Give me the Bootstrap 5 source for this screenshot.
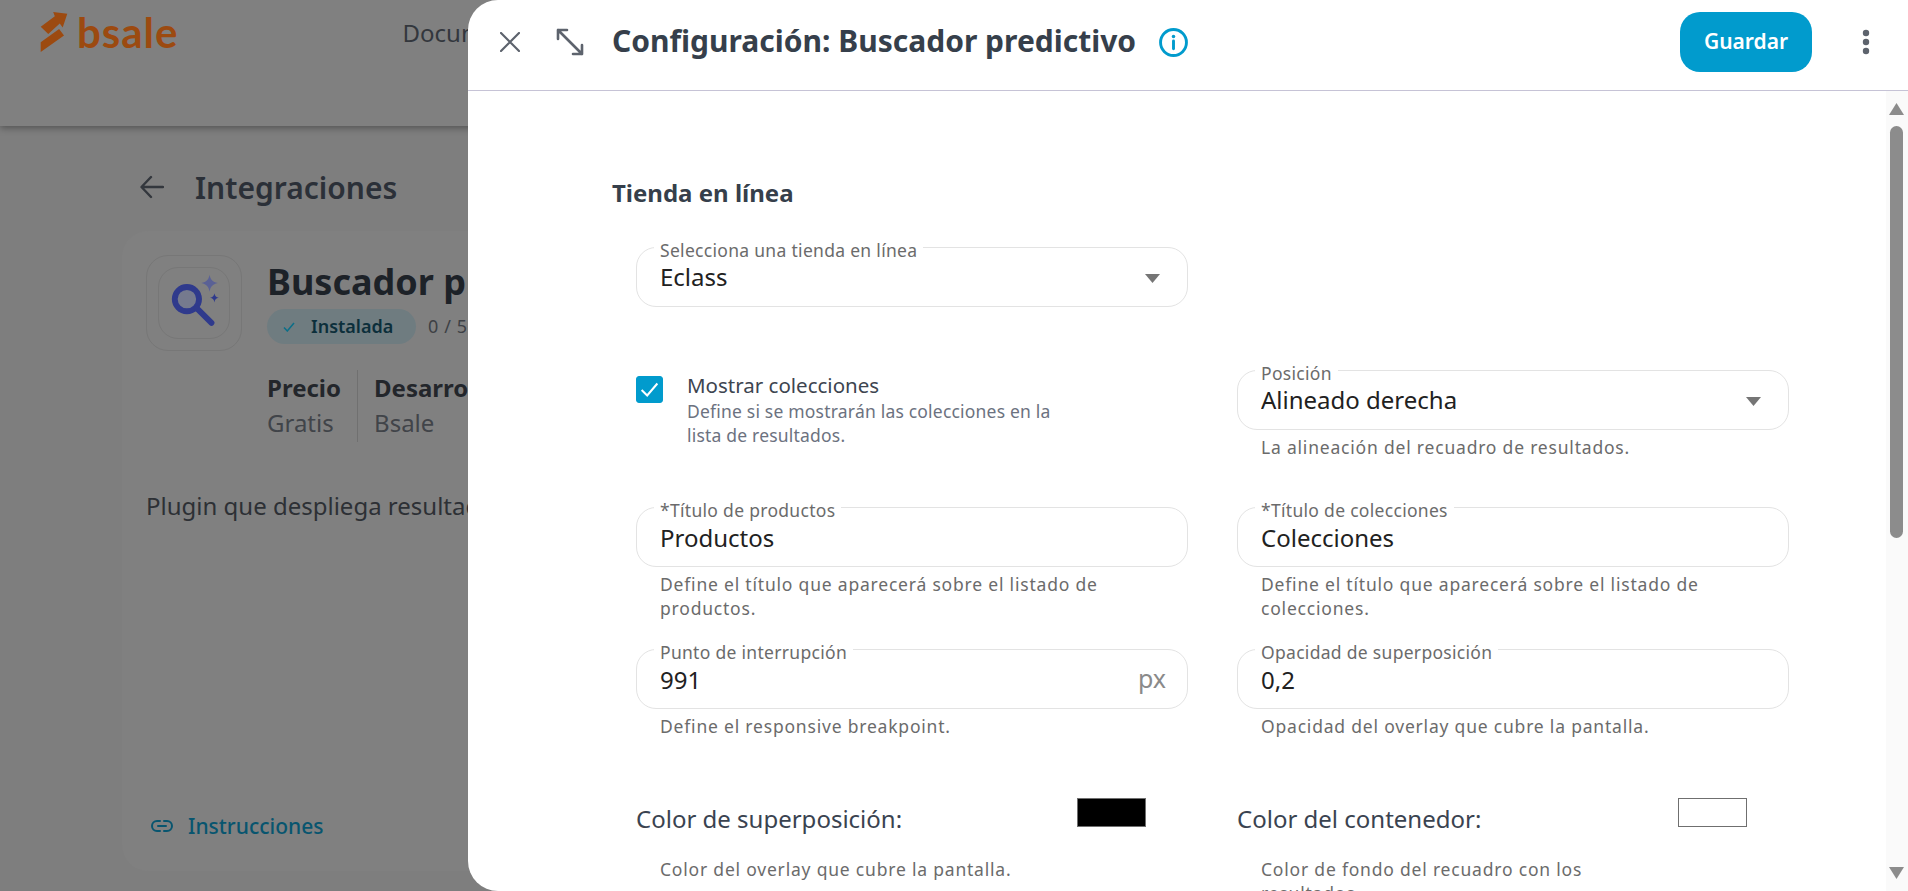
<!DOCTYPE html>
<html lang="es">
<head>
  <meta charset="UTF-8">
  <title>Configuración: Buscador predictivo</title>
  <meta name="viewport" content="width=device-width, initial-scale=1">
  <link href="https://cdn.jsdelivr.net/npm/bootstrap@5.3.3/dist/css/bootstrap.min.css" rel="stylesheet">
  <style>
    html, body { height: 100%; }
    body {
      background: #7e7e7e;
      font-family: "Noto Sans", "Open Sans", sans-serif;
      overflow: hidden;
    }
    /* page behind the panel, colours already dimmed */
    .page-top {
      height: 126px;
      background: #808080;
      box-shadow: 0 2px 7px rgba(0,0,0,.35);
      padding: 11px 0 0 40px;
    }
    .logo-word {
      font-family: "Lato", sans-serif;
      font-weight: 700;
      font-size: 42px;
      line-height: 42px;
      letter-spacing: 1px;
      color: #9c4a10;
      margin-left: 9px;
    }
    .page-link-top { font-size: 24px; color: #33373d; margin: 4px 0 0 224px; white-space: nowrap; }
    .page-head { margin: 41px 0 0 140px; height: 40px; }
    .page-head-title { font-size: 30px; font-weight: 600; color: #2b3038; margin-left: 31px; }
    .app-card {
      margin: 24px 0 0 122px;
      width: 1660px;
      height: 640px;
      background: #808080;
      border-radius: 26px;
      padding: 24px;
    }
    .app-icon-out {
      width: 96px; height: 96px;
      border: 1px solid #777;
      border-radius: 22px;
      flex: none;
    }
    .app-icon-in {
      width: 72px; height: 72px;
      border: 1px solid #777;
      border-radius: 20px;
    }
    .app-info { margin-left: 25px; }
    .app-name { font-size: 36px; font-weight: 700; color: #1d2228; line-height: 54px; }
    .installed {
      width: 149px; height: 35px;
      background: #6f7c80;
      border-radius: 18px;
      font-size: 18px; font-weight: 600;
      color: #0c2f3b;
    }
    .rating { font-size: 18px; color: #3d4045; letter-spacing: .6px; margin-left: 12px; }
    .meta-block { margin-top: 26px; }
    .meta-h { font-size: 24px; font-weight: 700; color: #23262b; line-height: 35px; }
    .meta-v { font-size: 24px; color: #414449; line-height: 35px; }
    .meta-line { border-left: 1px solid #707070; margin-left: 16px; padding-left: 16px; height: 72px; }
    .app-desc { font-size: 24px; color: #2d3035; margin-top: 46px; white-space: nowrap; }
    .app-link {
      font-size: 21px; font-weight: 500; color: #08556f;
      margin: auto 0 5px 5px;
      column-gap: 15px;
    }

    /* panel */
    .cfg-panel {
      position: absolute;
      top: 0; right: 0; bottom: 0; left: 468px;
      background: #fff;
      border-radius: 30px 0 0 30px;
      overflow: hidden;
    }
    .cfg-top {
      height: 91px;
      flex: none;
      border-bottom: 1px solid #c6c3d6;
      padding: 0 37px 6px 32px;
    }
    .cfg-expand { margin: 0 28px 0 36px; }
    .cfg-title { font-size: 30px; font-weight: 700; color: #363f4b; margin: -2px 0 0 0; white-space: nowrap; }
    .cfg-info { margin-left: 23px; }
    .cfg-kebab { margin-left: 49px; }
    .btn-save {
      width: 132px; height: 60px;
      background: #019bcd;
      border: 0;
      border-radius: 20px;
      color: #fff;
      font-size: 21px;
      font-weight: 600;
    }
    .cfg-main { min-height: 0; }
    .cfg-body { padding: 88px 0 0 144px; overflow: hidden; }
    .cfg-section { font-size: 24px; font-weight: 700; color: #363f4b; line-height: 28px; margin: 0 0 40px; }
    .cfg-grid {
      grid-template-columns: 552px 552px;
      grid-template-rows: 123px 137px 142px 149px auto;
      column-gap: 49px;
      margin-left: 24px;
    }
    .float-field { position: relative; height: 60px; }
    .float-field label {
      position: absolute;
      top: -6px; left: 18px;
      padding: 0 6px;
      background: #fff;
      font-size: 17.5px;
      line-height: 19px;
      letter-spacing: .3px;
      color: #6b6b6b;
    }
    .float-field .form-control,
    .float-field .form-select {
      height: 60px;
      border: 1px solid #e3e3e3;
      border-radius: 20px;
      padding: 0 50px 0 23px;
      font-size: 24px;
      color: #212121;
    }
    .float-field .form-select {
      background-image: url("data:image/svg+xml,%3csvg xmlns='http://www.w3.org/2000/svg' viewBox='0 0 15 9'%3e%3cpath fill='%23757575' d='M0 0h15L7.5 9z'/%3e%3c/svg%3e");
      background-position: right 27px top 26px;
      background-size: 15px 9px;
    }
    .field-unit {
      position: absolute;
      right: 22px; top: 14px;
      font-size: 25px;
      line-height: 30px;
      color: #8a8a8a;
    }
    .help-text {
      font-size: 17.5px;
      line-height: 24px;
      letter-spacing: .8px;
      color: #6b6b6b;
      padding: 5px 0 0 24px;
      max-width: 500px;
    }
    .check-box.form-check-input {
      width: 27px; height: 27px;
      margin: 6px 24px 0 0;
      border-radius: 3px;
      flex: none;
    }
    .check-box.form-check-input:checked {
      background-color: #019bcd;
      border-color: #019bcd;
      background-size: 100% 100%;
      background-image: url("data:image/svg+xml,%3csvg xmlns='http://www.w3.org/2000/svg' viewBox='0 0 27 27'%3e%3cpath fill='none' stroke='%23fff' stroke-width='2.2' d='M5 14l6 6L22 7'/%3e%3c/svg%3e");
    }
    .check-title { font-size: 20.5px; line-height: 26px; color: #3d4550; margin-top: 2px; }
    .check-help { font-size: 17.5px; line-height: 24px; letter-spacing: .2px; color: #6c7280; width: 375px; margin-top: 1px; }
    .color-label { width: 441px; font-size: 24px; line-height: 30px; color: #3a4350; padding-top: 6px; }
    .color-chip { width: 69px; height: 29px; border: 1px solid #6f6f6f; }
    .color-help { padding-top: 23px; max-width: 390px; }

    .fake-scroll { width: 22px; flex: none; background: #fafafa; padding-top: 12px; }
    .scroll-thumb { width: 13px; height: 412px; margin: 11px 0 0 4px; background: #8c8c8c; border-radius: 7px; }
    .scroll-up, .scroll-down { display: block; width: 15px; height: 12px; margin-left: 3px; }
    .scroll-down { margin-top: auto; margin-bottom: 12px; }
  </style>
</head>
<body>
  <div class="page-top d-flex align-items-start">
    <svg width="28" height="42" viewBox="60 30 85 128" aria-hidden="true"><path fill="#9c4a10" d="M62 78 105 46 100 33l43 5-14 42-9-12-35 32zM62 155v-30l56-40 15 20z"/></svg>
    <span class="logo-word">bsale</span>
    <span class="page-link-top">Documentación</span>
  </div>
  <div class="page-head d-flex align-items-center">
    <svg width="24" height="24" viewBox="0 0 24 24" fill="none" stroke="#33373d" stroke-width="2.400" stroke-linecap="round" stroke-linejoin="round"><path d="M23 12H2M11 2 1.500 12 11 22"/></svg>
    <span class="page-head-title">Integraciones</span>
  </div>
  <div class="app-card d-flex flex-column">
    <div class="d-flex">
      <div class="app-icon-out d-flex align-items-center justify-content-center">
        <div class="app-icon-in">
          <svg width="70" height="70" viewBox="0 0 72 72">
            <circle cx="28.700" cy="32" r="12.500" fill="#757a8e" stroke="#2f3a8c" stroke-width="6"/>
            <path d="M39 41.500 54 56.500" stroke="#2f3a8c" stroke-width="6" stroke-linecap="round"/>
            <path fill="#5a6195" d="M52 7c1 5 3 7.500 8.500 8.500C55 17 53 19 52 24.500 51 19 49 17 43.500 15.500 49 14.500 51 12 52 7z"/>
            <path fill="#2f3a8c" d="M57 26c.5 3 1.500 4 4.500 4.700-3 .6-4 1.800-4.500 4.800-.5-3-1.500-4.200-4.500-4.800 3-.7 4-1.700 4.500-4.700z"/>
          </svg>
        </div>
      </div>
      <div class="app-info">
        <div class="app-name">Buscador predictivo</div>
        <div class="d-flex align-items-center">
          <span class="installed d-flex align-items-center">
            <svg class="ms-3" width="12" height="10" viewBox="0 0 12 10" fill="none" stroke="#0b6f88" stroke-width="1.500"><path d="M1 5.500 4.300 9 11 1"/></svg>
            <span class="ms-3">Instalada</span>
          </span>
          <span class="rating">0 / 5</span>
        </div>
        <div class="meta-block d-flex">
          <div><div class="meta-h">Precio</div><div class="meta-v">Gratis</div></div>
          <div class="meta-line"><div class="meta-h">Desarrollador</div><div class="meta-v">Bsale</div></div>
        </div>
      </div>
    </div>
    <div class="app-desc">Plugin que despliega resultados de búsqueda</div>
    <div class="app-link d-flex align-items-center">
      <svg width="22" height="12" viewBox="0 0 22 12" fill="none" stroke="#08556f" stroke-width="2" stroke-linecap="round"><path d="M9 1H6a5 5 0 0 0 0 10h3M13 1h3a5 5 0 0 1 0 10h-3M7 6h8"/></svg>
      <span>Instrucciones</span>
    </div>
  </div>

  <div class="cfg-panel d-flex flex-column">
    <div class="cfg-top d-flex align-items-center">
      <svg width="20" height="20" viewBox="0 0 20 20" fill="none" stroke="#5d636d" stroke-width="2.200" stroke-linecap="round"><path d="M1 1l18 18M19 1 1 19"/></svg>
      <svg class="cfg-expand" width="28" height="28" viewBox="0 0 28 28" fill="none" stroke="#5d636d" stroke-width="2.600" stroke-linecap="round" stroke-linejoin="round"><path d="M2 2l24 24M2 11V2h9M26 17v9h-9"/></svg>
      <h1 class="cfg-title">Configuración: Buscador predictivo</h1>
      <svg class="cfg-info" width="29" height="29" viewBox="0 0 28 28" fill="none"><circle cx="14" cy="14" r="12.500" stroke="#019bcd" stroke-width="2.800"/><path d="M14 12.500V20" stroke="#019bcd" stroke-width="2.800" stroke-linecap="round"/><circle cx="14" cy="8.300" r="1.700" fill="#019bcd"/></svg>
      <button type="button" class="btn btn-save ms-auto">Guardar</button>
      <svg class="cfg-kebab" width="10" height="26" viewBox="0 0 10 26" fill="#5d636d"><circle cx="5" cy="4" r="3.200"/><circle cx="5" cy="13" r="3.200"/><circle cx="5" cy="22" r="3.200"/></svg>
    </div>
    <div class="cfg-main d-flex flex-grow-1">
      <div class="cfg-body flex-grow-1">
        <h2 class="cfg-section">Tienda en línea</h2>
        <div class="cfg-grid d-grid">
          <div class="float-field">
            <label for="store">Selecciona una tienda en línea</label>
            <select id="store" class="form-select"><option>Eclass</option></select>
          </div>
          <div></div>

          <div class="d-flex align-items-start">
            <input class="check-box form-check-input" type="checkbox" checked>
            <div>
              <div class="check-title">Mostrar colecciones</div>
              <div class="check-help">Define si se mostrarán las colecciones en la lista de resultados.</div>
            </div>
          </div>
          <div>
            <div class="float-field">
              <label for="pos">Posición</label>
              <select id="pos" class="form-select"><option>Alineado derecha</option></select>
            </div>
            <div class="help-text">La alineación del recuadro de resultados.</div>
          </div>

          <div>
            <div class="float-field">
              <label for="tp">*Título de productos</label>
              <input id="tp" class="form-control" value="Productos">
            </div>
            <div class="help-text">Define el título que aparecerá sobre el listado de productos.</div>
          </div>
          <div>
            <div class="float-field">
              <label for="tc">*Título de colecciones</label>
              <input id="tc" class="form-control" value="Colecciones">
            </div>
            <div class="help-text">Define el título que aparecerá sobre el listado de colecciones.</div>
          </div>

          <div>
            <div class="float-field">
              <label for="bp">Punto de interrupción</label>
              <input id="bp" class="form-control" value="991">
              <span class="field-unit">px</span>
            </div>
            <div class="help-text">Define el responsive breakpoint.</div>
          </div>
          <div>
            <div class="float-field">
              <label for="op">Opacidad de superposición</label>
              <input id="op" class="form-control" value="0,2">
            </div>
            <div class="help-text">Opacidad del overlay que cubre la pantalla.</div>
          </div>

          <div>
            <div class="d-flex align-items-start">
              <div class="color-label">Color de superposición:</div>
              <div class="color-chip bg-black"></div>
            </div>
            <div class="help-text color-help">Color del overlay que cubre la pantalla.</div>
          </div>
          <div>
            <div class="d-flex align-items-start">
              <div class="color-label">Color del contenedor:</div>
              <div class="color-chip bg-white"></div>
            </div>
            <div class="help-text color-help">Color de fondo del recuadro con los resultados.</div>
          </div>
        </div>
      </div>
      <div class="fake-scroll d-flex flex-column">
        <svg class="scroll-up" viewBox="0 0 15 12"><path fill="#8c8c8c" d="M7.500 0 15 12H0z"/></svg>
        <div class="scroll-thumb"></div>
        <svg class="scroll-down" viewBox="0 0 15 12"><path fill="#8c8c8c" d="M0 0h15L7.500 12z"/></svg>
      </div>
    </div>
  </div>

  <script src="https://cdn.jsdelivr.net/npm/bootstrap@5.3.3/dist/js/bootstrap.bundle.min.js"></script>
</body>
</html>
